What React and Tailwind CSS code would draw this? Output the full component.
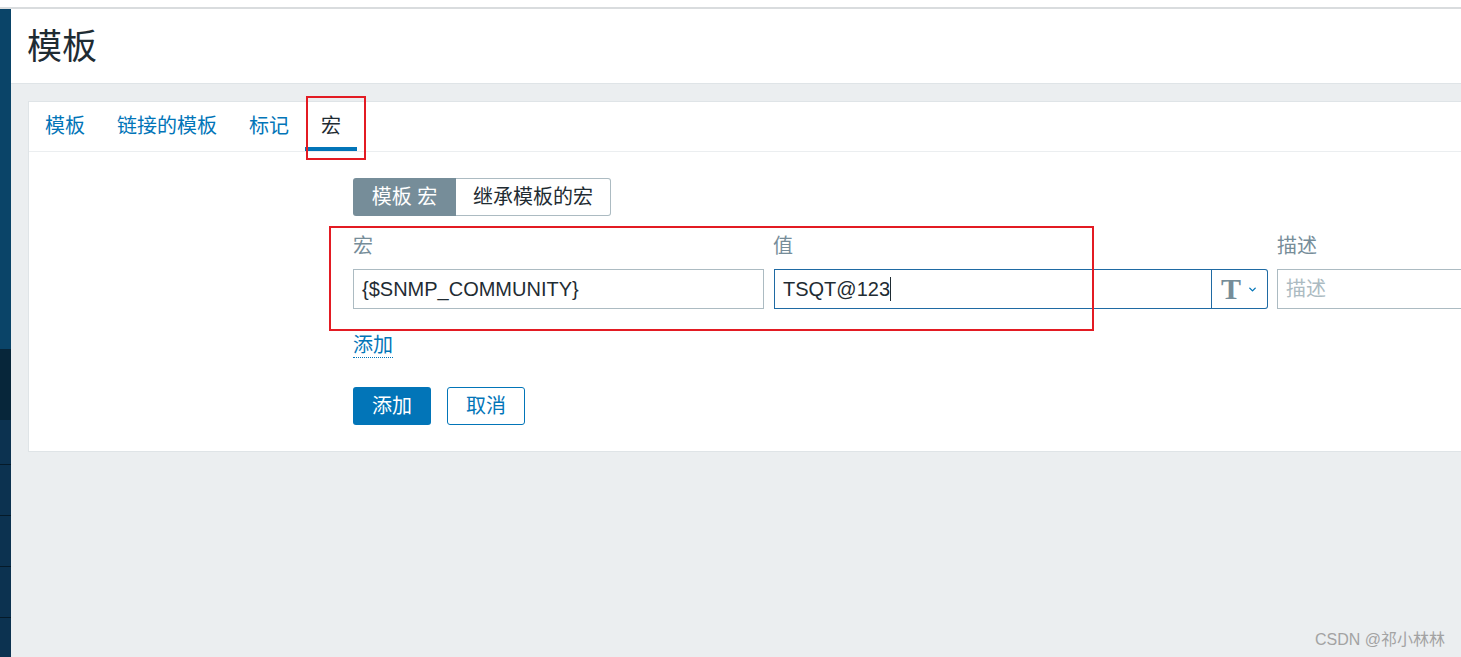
import { ChevronDown } from 'lucide-react';

const tabs = ['模板', '链接的模板', '标记', '宏'];

export default function App() {
  return (
    <div className="relative w-[1461px] h-[657px] overflow-hidden bg-white font-['Liberation_Sans','Noto_Sans_CJK_SC',sans-serif]">
      <div className="h-[7px] bg-white" />
      <div className="h-[2px] bg-[#d9dcde]" />

      <div className="flex h-[648px]">
        {/* sidebar */}
        <div className="w-[11px] shrink-0 flex flex-col">
          <div className="h-[340px] bg-[#0a4468]" />
          <div className="h-[71px] bg-[#07263a]" />
          <div className="flex-1 flex flex-col bg-[#0c3250]">
            <div className="h-[44px]" />
            <div className="h-px bg-[#051a29]" />
            <div className="h-[50px]" />
            <div className="h-px bg-[#051a29]" />
            <div className="h-[50px]" />
            <div className="h-px bg-[#051a29]" />
            <div className="h-[50px]" />
            <div className="h-px bg-[#051a29]" />
          </div>
        </div>

        {/* main */}
        <div className="flex-1 bg-[#ebeef0]">
          <div className="h-[75px] bg-white border-b border-[#dfe4e7] flex items-center pl-[16px]">
            <h1 className="text-[35px] leading-none text-[#1f2c33] font-normal">模板</h1>
          </div>

          <div className="ml-[17px] mt-[17px] w-[1500px] bg-white border border-[#dfe4e7]">
            {/* tabs */}
            <div className="flex h-[50px] border-b border-[#ebeef0]">
              {tabs.map((t) => (
                <div
                  key={t}
                  className={`px-4 flex items-center text-[20px] border-b-[4px] ${
                    t === '宏' ? 'text-[#1f2c33] border-[#0275b8]' : 'text-[#0275b8] border-transparent'
                  }`}
                >
                  <span className="mt-[3px]">{t}</span>
                </div>
              ))}
            </div>

            {/* form */}
            <div className="pl-[324px] pt-[26px] pb-[26px]">
              <div className="flex h-[38px] w-[258px] text-[20px]">
                <div className="w-[103px] bg-[#768d99] text-white rounded-l-[3px] flex items-center justify-center">
                  模板 宏
                </div>
                <div className="flex-1 border border-l-0 border-[#acbbc2] rounded-r-[3px] text-[#1f2c33] flex items-center justify-center">
                  继承模板的宏
                </div>
              </div>

              <div className="flex mt-[20px] h-[20px] leading-[20px] text-[20px] text-[#768d99]">
                <div className="w-[420px] shrink-0">宏</div>
                <div className="w-[504px] shrink-0">值</div>
                <div className="shrink-0">描述</div>
              </div>

              <div className="flex mt-[13px] h-[40px] text-[20px] text-[#1f2c33]">
                <div className="w-[411px] shrink-0 border border-[#acbbc2] px-2 flex items-center">
                  {'{$SNMP_COMMUNITY}'}
                </div>
                <div className="ml-[10px] flex w-[494px] shrink-0">
                  <div className="w-[438px] border border-[#1f6aa3] px-2 flex items-center">
                    TSQT@123
                    <span className="inline-block w-px h-[24px] bg-[#1f2c33]" />
                  </div>
                  <div className="w-[56px] border border-l-0 border-[#1f6aa3] rounded-r-[3px] flex items-center justify-center gap-[6px]">
                    <span className="font-['Liberation_Serif',serif] font-bold text-[30px] leading-none text-[#768d99]">T</span>
                    <ChevronDown size={11} strokeWidth={3} className="text-[#0275b8]" />
                  </div>
                </div>
                <div className="ml-[9px] w-[300px] shrink-0 border border-[#acbbc2] px-2 flex items-center text-[#acbbc2]">
                  描述
                </div>
              </div>

              <div className="mt-[26px]">
                <span className="text-[20px] leading-[20px] text-[#0275b8] border-b border-dotted border-[#0275b8] pb-[2px] inline-block">
                  添加
                </span>
              </div>

              <div className="flex gap-[16px] mt-[28px]">
                <button className="w-[78px] h-[38px] rounded-[3px] bg-[#0275b8] text-white text-[20px]">添加</button>
                <button className="w-[78px] h-[38px] rounded-[3px] bg-white border border-[#0275b8] text-[#0275b8] text-[20px]">取消</button>
              </div>
            </div>
          </div>
        </div>
      </div>

      {/* annotations */}
      <div className="absolute left-[306px] top-[96px] w-[60px] h-[64px] border-2 border-[#e31b23]" />
      <div className="absolute left-[329px] top-[226px] w-[765px] h-[105px] border-2 border-[#e31b23]" />

      <div className="absolute right-[16px] top-[628px] text-[16px] text-[#a3a3a3]">CSDN @祁小林林</div>
    </div>
  );
}
